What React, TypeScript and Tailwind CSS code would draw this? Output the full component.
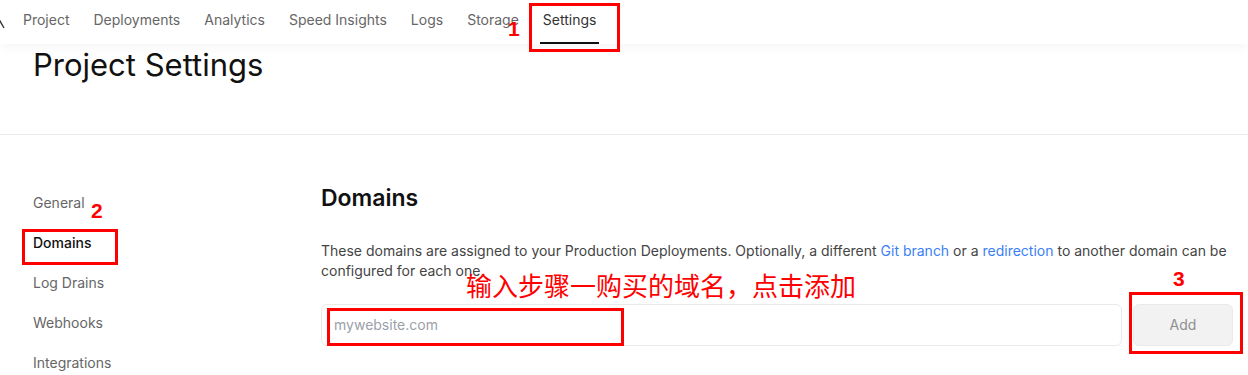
import React from "react";

const tabs = ["Project", "Deployments", "Analytics", "Speed Insights", "Logs", "Storage", "Settings"];
const sideItems = ["General", "Domains", "Log Drains", "Webhooks", "Integrations"];

export default function App() {
  return (
    <div className="relative w-[1248px] h-[375px] overflow-hidden bg-white font-['Inter','Noto_Sans',sans-serif]">
      {/* Top tabs */}
      <header className="relative z-10 h-[44px] bg-white shadow-[0_3px_12px_rgba(0,0,0,0.045)] flex items-center pb-1 pl-[23px] gap-[24px] text-sm text-[#666]">
        <svg className="absolute left-[-5px] top-[20px]" width="10" height="9" viewBox="0 0 10 9">
          <path d="M1 8 L5 1 L9 8" fill="none" stroke="#333" strokeWidth="1.4" />
        </svg>
        {tabs.map((t) => (
          <div key={t} className={"relative h-full flex items-center " + (t === "Settings" ? "text-[#333]" : "")}>
            {t}
            {t === "Settings" && <span className="absolute left-[-3px] right-[-3px] bottom-[-4px] h-[2px] bg-[#111]" />}
          </div>
        ))}
      </header>

      {/* Title */}
      <div className="h-[91px] border-b border-[#eaeaea] px-[33px] pt-[1px]">
        <h1 className="text-[31px] leading-10 text-[#111]">Project Settings</h1>
      </div>

      {/* Body */}
      <div className="flex pt-[48px]">
        <nav className="w-[321px] shrink-0 pl-[33px] flex flex-col text-sm">
          {sideItems.map((s) => (
            <div key={s} className={"h-[40px] flex items-center " + (s === "Domains" ? "text-[#111] font-medium" : "text-[#666]")}>
              {s}
            </div>
          ))}
        </nav>
        <main className="w-[912px] shrink-0">
          <h2 className="-mt-[1px] text-[23px] leading-8 font-semibold text-[#111]">Domains</h2>
          <p className="mt-[27px] text-sm leading-5 text-[#444]">
            These domains are assigned to your Production Deployments. Optionally, a different{" "}
            <span className="text-[#3b7ff5]">Git branch</span> or a <span className="text-[#3b7ff5]">redirection</span> to
            another domain can be configured for each one.
          </p>
          <div className="mt-[23px] flex gap-[11px]">
            <div className="flex-1 h-[42px] rounded-md border border-[#eaeaea] bg-white flex items-center px-3 text-sm text-[#9aa0a8]">
              mywebsite.com
            </div>
            <button className="w-[100px] h-[42px] rounded-md border border-[#eaeaea] bg-[#f2f2f2] text-sm text-[#8f8f8f]">
              Add
            </button>
          </div>
        </main>
      </div>

      {/* Red annotations drawn over the screenshot */}
      <div className="absolute z-20 left-[529px] top-[3px] w-[91px] h-[49px] border-[3px] border-[#f00]" />
      <div className="absolute z-20 left-[508px] top-[17px] text-[21px] leading-6 font-bold text-[#f00] font-['Liberation_Sans',sans-serif]">1</div>

      <div className="absolute z-20 left-[22px] top-[229px] w-[96px] h-[36px] border-[3px] border-[#f00]" />
      <div className="absolute z-20 left-[91px] top-[199px] text-[21px] leading-6 font-bold text-[#f00] font-['Liberation_Sans',sans-serif]">2</div>

      <div className="absolute z-20 left-[1129px] top-[292px] w-[114px] h-[62px] border-[3px] border-[#f00]" />
      <div className="absolute z-20 left-[1173px] top-[267px] text-[21px] leading-6 font-bold text-[#f00] font-['Liberation_Sans',sans-serif]">3</div>

      <div className="absolute z-20 left-[327px] top-[308px] w-[297px] h-[38px] border-[3px] border-[#f00]" />
      <div className="absolute z-20 left-[466px] top-[268px] text-[26px] leading-[34px] text-[#f00] font-['Noto_Sans_CJK_SC',sans-serif]">
        输入步骤一购买的域名，点击添加
      </div>
    </div>
  );
}
